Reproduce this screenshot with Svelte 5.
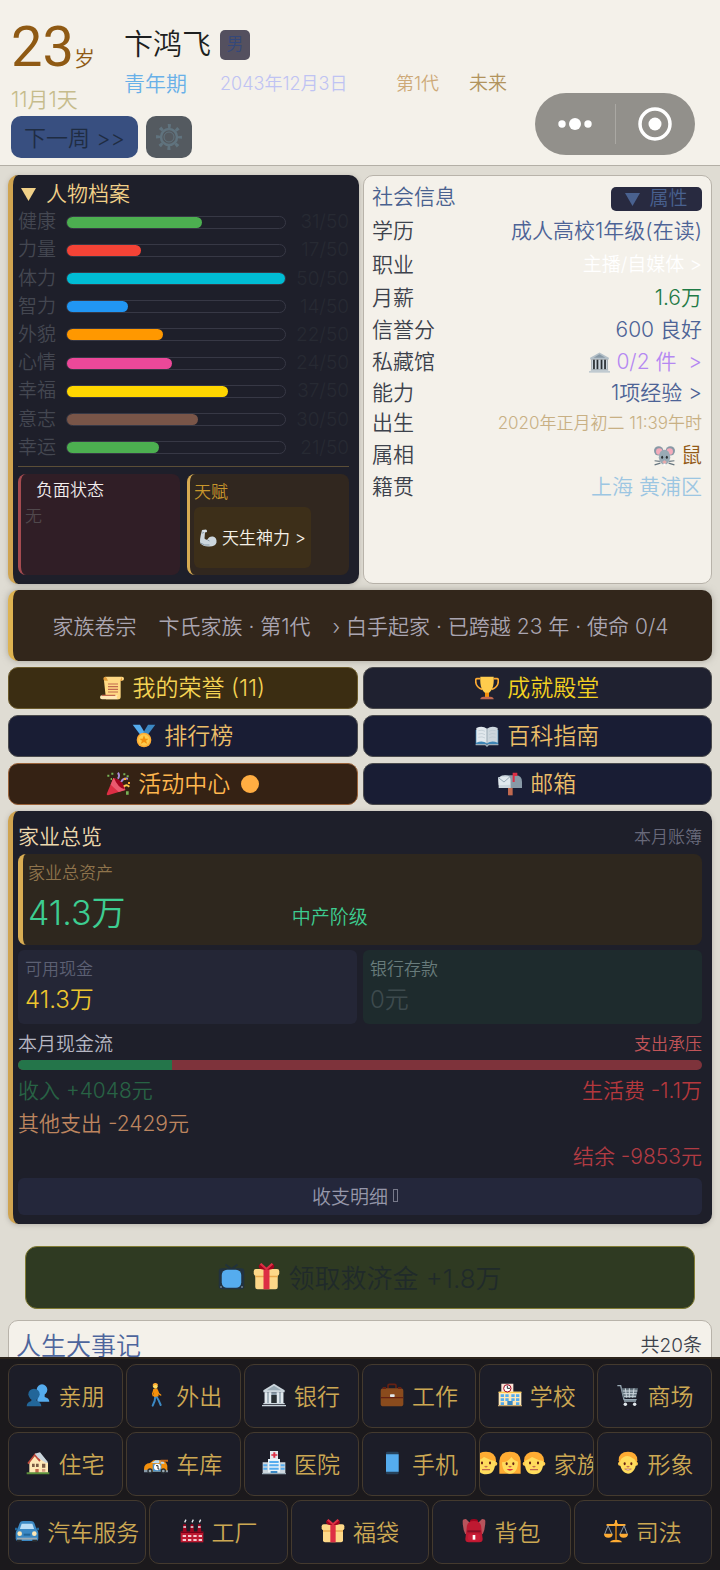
<script>
  const icons = {
    people: '<circle cx="24" cy="10" r="8" fill="#55acee"/><path d="M20 15h8v6c4 1 7 3 7 7H17v-8z" fill="#55acee"/><circle cx="12" cy="17" r="8.5" fill="#226699"/><path d="M8 23h8v4c4 1 7 3 7 8H1c0-5 3-7 7-8z" fill="#226699"/>',
    walk: '<path d="M17 19l-1 8-3 7M18 19l4 7 3 7" fill="none" stroke="#3b88c3" stroke-width="3" stroke-linecap="round"/><path d="M14 9l6-1 2 12-7 1z" fill="#f4900c"/><path d="M15 10l-2 6 1 3M20 11l2 5 3 2" fill="none" stroke="#f4900c" stroke-width="2.200" stroke-linecap="round"/><circle cx="17" cy="5" r="3.500" fill="#ffdc5d"/><path d="M13 4q0-4 4-4 4 0 4 4-3-2-8 0z" fill="#ffac33"/>',
    bank: '<path d="M18 1L2 11v3h32v-3z" fill="#ccd6dd"/><path d="M18 4L7 11h22z" fill="#99aab5"/><path d="M4 14h28v16H4z" fill="#8899a6"/><path d="M4 14h4v16H4zM10 14h4v16h-4zM22 14h4v16h-4zM28 14h4v16h-4z" fill="#e1e8ed"/><path d="M14 18h8v13h-8z" fill="#292f33"/><path d="M2 30h32v2H2zM0 33h36v2H0z" fill="#ccd6dd"/>',
    museum: '<path d="M18 1L2 10v3h32v-3z" fill="#b4c0c8"/><path d="M18 4L8 10h20z" fill="#8899a6"/><path d="M4 13h28v17H4z" fill="#292f33"/><path d="M4 13h3v17H4zM10 13h3v17h-3zM16 13h4v17h-4zM23 13h3v17h-3zM29 13h3v17h-3z" fill="#ccd6dd"/><path d="M3 30h30v2H3zM0 33h36v2H0z" fill="#aebdc7"/>',
    work: '<path d="M12 8V4q0-2 2-2h8q2 0 2 2v4" fill="none" stroke="#662113" stroke-width="2.500"/><rect x="1" y="8" width="34" height="27" rx="4" fill="#8a4b1d"/><path d="M1 21h34v2H1z" fill="#662113"/><path d="M4 6h5v3H4zM27 6h5v3h-5z" fill="#662113"/><rect x="15" y="17" width="7" height="4" rx="1" fill="#e1e8ed"/>',
    school: '<path d="M5 1h18v14H5z" fill="#fce4d6"/><path d="M1 13h34v20H1z" fill="#ffe8b6"/><path d="M1 13h34v2H1z" fill="#ffcc4d"/><circle cx="14" cy="8" r="5.500" fill="#fff" stroke="#a0041e" stroke-width="1.500"/><path d="M14 4v4h4" fill="none" stroke="#292f33" stroke-width="1.500"/><path d="M4 17h5v4H4zM11 17h5v4h-5zM20 17h5v4h-5zM27 17h5v4h-5zM4 23h5v4H4zM11 23h5v4h-5zM20 23h5v4h-5zM27 23h5v4h-5zM4 29h5v4H4zM27 29h5v4h-5z" fill="#55acee"/><path d="M14 27h8v7h-8z" fill="#3b88c3"/><path d="M0 33h36v2H0z" fill="#c1a36b"/>',
    cart: '<path d="M2 4h5l5 21h19" fill="none" stroke="#99aab5" stroke-width="2"/><path d="M8 8h25l-3 14H11z" fill="#66757f"/><path d="M10 12h22M11 16h20M12 20h18M14 8l2 14M20 8v14M27 8l-2 14" stroke="#ccd6dd" stroke-width="1.500"/><path d="M12 27h18" stroke="#99aab5" stroke-width="2"/><circle cx="14" cy="32" r="2.600" fill="#e1e8ed"/><circle cx="28" cy="32" r="2.600" fill="#e1e8ed"/>',
    house: '<path d="M5 16L14 6l8-2 11 14v15H5z" fill="#ffe8b6"/><path d="M2 18L14 3l8 11-2 2-7-8-9 12z" fill="#be4a3c"/><path d="M13 4l8-2 12 15-3 1-12-8z" fill="#ccd6dd"/><path d="M9 19h4v5H9zM15 19h4v5h-4zM24 19h5v6h-5z" fill="#7b5a43"/><path d="M14 27h5v7h-5z" fill="#c1694f"/><path d="M1 32h34v3H1z" fill="#5c913b"/><path d="M24 27h5v4h-5z" fill="#d99e82"/>',
    race: '<path d="M0 27q0-8 9-9l5-4h12q7 1 9 8v9H0z" fill="#f4900c"/><path d="M13 17l4-3h6v4H11zM25 14h3l3 5h-6z" fill="#bbddf5"/><path d="M0 28h7v4H0zM31 29h5v3h-5z" fill="#8899a6"/><path d="M25 13h11v3H25z" fill="#c46a1a"/><path d="M13 19h13v12H13z" fill="#4f93c8"/><circle cx="20" cy="24" r="5" fill="#fff"/><path d="M18 22h3v5h2" fill="none" stroke="#292f33" stroke-width="1.500"/><circle cx="9" cy="30" r="4" fill="#292f33"/><circle cx="29" cy="30" r="4" fill="#292f33"/><circle cx="9" cy="30" r="2" fill="#99aab5"/><circle cx="29" cy="30" r="2" fill="#99aab5"/>',
    hospital: '<path d="M9 13h18v21H9z" fill="#e1e8ed"/><path d="M1 17h34v17H1z" fill="#ccd6dd"/><path d="M9 12h18v20H9z" fill="#e8f2f8"/><rect x="12" y="0" width="12" height="12" fill="#e1e8ed"/><path d="M17 2h3v3h3v2h-3v3h-3V7h-3V5h3z" fill="#dd2e44"/><path d="M11 15h14v3H11zM11 20h14v3H11zM11 25h14v3H11zM2 20h6v3H2zM2 25h6v3H2zM28 20h6v3h-6zM28 25h6v3h-6z" fill="#55acee"/><path d="M13 30h10v4H13z" fill="#3b88c3"/><path d="M0 33h36v2H0z" fill="#99aab5"/>',
    phone: '<rect x="9" y="1" width="19" height="34" rx="2" fill="#27425b"/><path d="M9 5h19v26H9z" fill="#55acee"/>',
    boy: '<path d="M4 14Q4 1 18 1t14 13l-2 8H6z" fill="#ffac33"/><circle cx="6" cy="19" r="3" fill="#ffcc4d"/><circle cx="30" cy="19" r="3" fill="#ffcc4d"/><path d="M6 17q0-6 8-9 5-2 11 3 5 2 5 7c0 10-6 16-12 16S6 27 6 17z" fill="#ffdc5d"/><ellipse cx="13" cy="19" rx="1.600" ry="2.200" fill="#662113"/><ellipse cx="23" cy="19" rx="1.600" ry="2.200" fill="#662113"/><path d="M16 23q2 1.500 4 0" fill="none" stroke="#c1694f" stroke-width="1.800"/><path d="M13 27q5 4 10 0z" fill="#fff" stroke="#c1694f"/>',
    man: '<path d="M3 14Q4 1 18 1t15 13l-1 9H4z" fill="#ffac33"/><circle cx="4" cy="19" r="3" fill="#ffcc4d"/><circle cx="32" cy="19" r="3" fill="#ffcc4d"/><path d="M4 15q6-2 11-6 9 5 17 6c0 13-4 20-14 20S4 28 4 15z" fill="#ffdc5d"/><ellipse cx="12" cy="18" rx="1.600" ry="2.200" fill="#662113"/><ellipse cx="24" cy="18" rx="1.600" ry="2.200" fill="#662113"/><path d="M16 23q2 1.500 4 0M12 28h12" fill="none" stroke="#c1694f" stroke-width="2"/>',
    woman: '<path d="M2 34V15Q3 1 18 1t16 14v19H2z" fill="#ffac33"/><path d="M6 17q9 0 14-8 3 5 10 7c0 12-5 18-12 18S6 28 6 17z" fill="#ffdc5d"/><ellipse cx="13" cy="19" rx="1.600" ry="2.200" fill="#662113"/><ellipse cx="23" cy="19" rx="1.600" ry="2.200" fill="#662113"/><path d="M16 23q2 1.500 4 0" fill="none" stroke="#c1694f" stroke-width="1.800"/><path d="M13 27h10q-5 5-10 0z" fill="#dd2e44"/>',
    car: '<path d="M7 6q1-3 5-3h12q4 0 5 3l4 11H3z" fill="#3b88c3"/><path d="M10 7h16l3 9H7z" fill="#bbddf5"/><path d="M0 13h4v4H0zM32 13h4v4h-4z" fill="#226699"/><path d="M1 22q0-7 6-7h22q6 0 6 7v8q0 3-4 3H5q-4 0-4-3z" fill="#3b88c3"/><circle cx="7" cy="22" r="3.500" fill="#ffe8b6"/><circle cx="29" cy="22" r="3.500" fill="#ffe8b6"/><path d="M13 22h10v3H13z" fill="#226699"/><path d="M3 28h30v3H3z" fill="#99aab5"/><path d="M3 31h7v3H3zM26 31h7v3h-7z" fill="#292f33"/>',
    factory: '<path d="M5 8h4l1 12H4zM16 8h4l1 12h-6zM27 8h4l1 12h-6z" fill="#a0041e"/><path d="M5 11h4v2H5zM16 11h4v2h-4zM27 11h4v2h-4z" fill="#e1e8ed"/><path d="M7 5l2-4M18 5l2-4M29 5l2-4" stroke="#e1e8ed" stroke-width="2"/><path d="M1 19h34v16H1z" fill="#be1931"/><path d="M4 24h5v3H4zM12 24h5v3h-5zM20 24h5v3h-5zM28 24h5v3h-5zM4 30h5v3H4zM12 30h5v3h-5zM20 30h5v3h-5zM28 30h5v3h-5z" fill="#f4c8d0"/><path d="M1 19h34v2H1z" fill="#78001a"/>',
    gift: '<path d="M3 14h30v18q0 3-3 3H6q-3 0-3-3z" fill="#fdd888"/><rect x="1" y="8" width="34" height="9" rx="3" fill="#fdd888"/><path d="M3 17h30v2H3z" fill="#e9a94c"/><path d="M14 8h8v27h-8z" fill="#dd2e44"/><path d="M17 9Q6 9 8 3q2-4 9 5zM19 9q11 0 9-6-2-4-9 5z" fill="#a0041e"/><path d="M18 8L10 1M18 8l8-7" stroke="#dd2e44" stroke-width="3"/>',
    bag: '<path d="M1 3q0-3 5-3l6 6-3 14-4 3q-4-8-4-20zM35 3q0-3-5-3l-6 6 3 14 4 3q4-8 4-20z" fill="#b8545c"/><path d="M12 3q0-3 6-3t6 3v5H12z" fill="#a0041e"/><path d="M7 14Q7 3 18 3t11 11l2 16q0 5-5 5H10q-5 0-5-5z" fill="#be1931"/><path d="M8 17h20v3H8z" fill="#850f27"/><rect x="9" y="22" width="18" height="11" rx="4" fill="#c91c38"/><path d="M16 24h4v7h-4z" fill="#fff"/>',
    law: '<path d="M17 2h2v29h-2z" fill="#f4900c"/><path d="M5 9h26M18 3v5" stroke="#ffac33" stroke-width="3" stroke-linecap="round"/><circle cx="18" cy="8" r="3" fill="#ffac33"/><path d="M6 10L1 23M6 10l6 13M30 10l-6 13M30 10l5 13" stroke="#8899a6" stroke-width="1.500"/><path d="M0 22h13q0 6-6.500 6T0 22zM23 22h13q0 6-6.500 6T23 22z" fill="#ffac33"/><path d="M9 35q1-4 9-4t9 4z" fill="#ffac33"/>',
    scroll: '<path d="M8 1h25q3 0 3 3t-3 3h-2v24q0 4-4 4H9L6 7z" fill="#ffd983"/><path d="M8 1q-3 0-3 3t3 3h4l-2-4zM33 1v6h-3z" fill="#e39f3d"/><path d="M3 29q-3 0-3 3t3 3h25q-3 0-3-3t3-3z" fill="#ffe8b6"/><path d="M3 29h20M12 12h15M12 16h15M12 20h15M12 24h15" stroke="#c1694f" stroke-width="1.800"/>',
    trophy: '<path d="M8 4H3q-2 0-2 3 0 10 10 13M28 4h5q2 0 2 3 0 10-10 13" fill="none" stroke="#ffac33" stroke-width="2.500"/><path d="M8 1h20c1 15-3 21-7 24v5h-6v-5C11 22 7 16 8 1z" fill="#ffcc4d"/><path d="M15 25h6v7h-6z" fill="#f4900c"/><path d="M8 35q0-4 5-4h10q5 0 5 4z" fill="#c1694f"/>',
    medal: '<path d="M1 1h11l9 15-5 5z" fill="#55acee"/><path d="M35 1H24l-9 15 5 5z" fill="#3b88c3"/><circle cx="18" cy="24" r="11" fill="#ffac33"/><circle cx="18" cy="24" r="8.500" fill="#ffcc4d"/><path d="M18 17l2 5h5l-4 3 2 5-5-3-5 3 2-5-4-3h5z" fill="#f4900c"/>',
    book: '<path d="M1 9h34v22H1z" fill="#3e85b5"/><path d="M2 6q9-4 16 1v22q-7-5-16-1z" fill="#e1e8ed"/><path d="M34 6q-9-4-16 1v22q7-5 16-1z" fill="#ccd6dd"/><path d="M18 7v22" fill="none" stroke="#99aab5" stroke-width="1.500"/><path d="M5 10q6-2 10 1M5 15q6-2 10 1M5 20q6-2 10 1M31 10q-6-2-10 1M31 15q-6-2-10 1M31 20q-6-2-10 1" fill="none" stroke="#b8c5ce"/><path d="M1 31h15l2 2 2-2h15" fill="none" stroke="#a0aeb8" stroke-width="2"/>',
    party: '<path d="M11 9q15 4 18 18L3 35q-2 0-2-2z" fill="#dd2e44"/><path d="M11 9q15 4 18 18L19 30 7 19z" fill="#ea596e"/><path d="M12 9q14 3 16 17-10-2-16-17z" fill="#a0041e"/><path d="M18 10q3-5 0-9M23 15q2-6 10-5" fill="none" stroke="#aa8dd8" stroke-width="3"/><path d="M27 22q3-4 8 0" fill="none" stroke="#ffcc4d" stroke-width="3"/><path d="M2 4h3v3H2zM8 1h3v3H8zM26 2h3v3h-3zM31 5h3v3h-3zM30 29h4v5h-4zM7 9h2v3H7z" fill="#77b255"/><path d="M27 9h3v3h-3zM33 15h3v3h-3z" fill="#ffac33"/>',
    mailbox: '<path d="M15 22h7v13h-7z" fill="#c1694f"/><path d="M10 5h17q9 0 9 10v9H10z" fill="#8899a6"/><path d="M1 13q0-8 9-8t9 8v11H1z" fill="#ccd6dd"/><path d="M0 8l18-1v12L1 20z" fill="#e1e8ed"/><path d="M0 8l9 7 9-8" fill="none" stroke="#99aab5" stroke-width="1.500"/><path d="M22 1h7v5h-4v9h-3z" fill="#dd2e44"/>',
    arm: '<path d="M6 2l8-1q3 1 2 5l-4 1-1 12q2 3 6 2 3-7 11-6 8 2 7 12-2 8-14 8Q9 36 3 29 0 24 6 2z" fill="#ccd6dd"/><path d="M6 8q3 1 4-2M17 22l4 2M3 28q8 6 18 4" fill="none" stroke="#8899a6" stroke-width="2"/><path d="M8 3l5-1 1 3-4 1z" fill="#e1e8ed"/>',
    mouse: '<circle cx="8" cy="10" r="8" fill="#8899a6"/><circle cx="28" cy="10" r="8" fill="#8899a6"/><circle cx="9" cy="11" r="5.500" fill="#f4abba"/><circle cx="27" cy="11" r="5.500" fill="#f4abba"/><path d="M18 8q9 0 10 14-3 12-10 12T8 22Q9 8 18 8z" fill="#99aab5"/><ellipse cx="14" cy="21" rx="1.700" ry="2.600" fill="#292f33"/><ellipse cx="22" cy="21" rx="1.700" ry="2.600" fill="#292f33"/><path d="M1 27l9 1M1 34l10-3M35 27l-9 1M35 34l-10-3" stroke="#66757f" stroke-width="2"/><path d="M14 29l4-3 4 3-4 4z" fill="#e6aaaa"/><path d="M16 32h4v3h-4z" fill="#fff"/>',
    tv: '<path d="M18 8L10 2M18 8l8-6" stroke="#22323a" stroke-width="2.500"/><rect x="1" y="7" width="34" height="28" rx="4" fill="#22323f"/><rect x="5" y="9" width="26" height="24" rx="7" fill="#55acee"/><path d="M3 31h2v2H3zM31 31h2v2h-2z" fill="#8899a6"/>'
  };

  const stats = [
    ['健康', 31, '#4caf50'],
    ['力量', 17, '#f44336'],
    ['体力', 50, '#00bcd4'],
    ['智力', 14, '#2196f3'],
    ['外貌', 22, '#ff9800'],
    ['心情', 24, '#ec4899'],
    ['幸福', 37, '#ffd600'],
    ['意志', 30, '#795548'],
    ['幸运', 21, '#4caf50']
  ];

  const social = [
    { k: '学历', v: '成人高校1年级(在读)', c: 'blue tall' },
    { k: '职业', v: '主播/自媒体 >', c: 'white tall', link: true },
    { k: '月薪', v: '1.6万', c: 'green' },
    { k: '信誉分', v: '600 良好', c: 'blue' },
    { k: '私藏馆', v: '0/2 件  >', c: 'purple', icon: 'museum', link: true },
    { k: '能力', v: '1项经验 >', c: 'blue short', link: true },
    { k: '出生', v: '2020年正月初二 11:39午时', c: 'sand short' },
    { k: '属相', v: '鼠', c: 'brown tall', icon: 'mouse' },
    { k: '籍贯', v: '上海 黄浦区', c: 'sky short' }
  ];

  const shortcuts = [
    { icon: 'scroll', t: '我的荣誉 (11)', c: 'olive' },
    { icon: 'trophy', t: '成就殿堂', c: 'slate' },
    { icon: 'medal', t: '排行榜', c: '' },
    { icon: 'book', t: '百科指南', c: '' },
    { icon: 'party', t: '活动中心', c: 'rust', dot: true },
    { icon: 'mailbox', t: '邮箱', c: '' }
  ];

  const income = 4048;
  const spending = 13901;
  const incomeShare = (income / (income + spending)) * 100;

  const nav = [
    [['people', '亲朋'], ['walk', '外出'], ['bank', '银行'], ['work', '工作'], ['school', '学校'], ['cart', '商场']],
    [['house', '住宅'], ['race', '车库'], ['hospital', '医院'], ['phone', '手机'], ['man woman man', '家族'], ['boy', '形象']],
    [['car', '汽车服务'], ['factory', '工厂'], ['gift', '福袋'], ['bag', '背包'], ['law', '司法']]
  ];
</script>

{#snippet pic(name)}
  <svg class="pic" viewBox="0 0 36 36" aria-hidden="true">{@html icons[name]}</svg>
{/snippet}

<div class="app">
  <header>
    <div class="top">
      <div class="age">
        <div class="years"><span class="big">23</span>岁</div>
        <div class="day">11月1天</div>
      </div>
      <div class="who">
        <h1>卞鸿飞 <span class="sex">男</span></h1>
        <div class="meta">
          <span class="stage">青年期</span>
          <span class="date">2043年12月3日</span>
          <span class="gen">第1代</span>
          <span class="era">未来</span>
        </div>
      </div>
    </div>
    <div class="actions">
      <button class="next">下一周 &gt;&gt;</button>
      <button class="gear" aria-label="设置">
        <svg viewBox="0 0 28 28" fill="none" stroke="#60737e">
          <circle cx="14" cy="14" r="8" stroke-width="2.500" />
          <circle cx="14" cy="14" r="5" stroke-width="1" />
          <circle cx="14" cy="14" r="11" stroke-width="4" stroke-dasharray="3 5.640" stroke-dashoffset="1.500" />
        </svg>
      </button>
    </div>
    <div class="capsule">
      <button aria-label="更多">
        <svg viewBox="0 0 36 14" width="36" height="14" fill="#fff"><circle cx="5" cy="7" r="3.700" /><circle cx="18" cy="7" r="6" /><circle cx="31" cy="7" r="3.700" /></svg>
      </button>
      <i></i>
      <button aria-label="关闭">
        <svg viewBox="0 0 34 34" width="34" height="34"><circle cx="17" cy="17" r="15" fill="none" stroke="#fff" stroke-width="3.500" /><circle cx="17" cy="17" r="6.500" fill="#fff" /></svg>
      </button>
    </div>
  </header>

  <main>
    <div class="pair">
      <section class="panel dark profile">
        <h2><svg class="tri" viewBox="0 0 15 13"><path d="M0 0h15L7.500 13z" fill="currentColor" /></svg>人物档案</h2>
        <div class="stats">
          {#each stats as [name, value, color]}
            <div class="stat">
              <span>{name}</span>
              <div class="track"><div class="fill" style="width:{value * 2}%;background:{color}"></div></div>
              <span class="num">{value}/50</span>
            </div>
          {/each}
        </div>
        <div class="traits">
          <div class="bad">
            <h3>负面状态</h3>
            <p>无</p>
          </div>
          <div class="gift">
            <h3>天赋</h3>
            <button>{@render pic('arm')}天生神力 &gt;</button>
          </div>
        </div>
      </section>

      <section class="panel light social">
        <div class="head">
          <h2>社会信息</h2>
          <button><svg class="tri" viewBox="0 0 15 13"><path d="M0 0h15L7.500 13z" fill="currentColor" /></svg>属性</button>
        </div>
        {#each social as row}
          <div class="info {row.c}">
            <span class="key">{row.k}</span>
            {#if row.link}
              <button class="val">{#if row.icon}{@render pic(row.icon)}{/if}{row.v}</button>
            {:else}
              <span class="val">{#if row.icon}{@render pic(row.icon)}{/if}{row.v}</span>
            {/if}
          </div>
        {/each}
      </section>
    </div>

    <button class="clan">
      <span>家族卷宗</span>
      <span>卞氏家族 · 第1代</span>
      <span>› 白手起家 · 已跨越 23 年 · 使命 0/4</span>
    </button>

    <div class="shortcuts">
      {#each shortcuts as s}
        <button class={s.c}>{@render pic(s.icon)}{s.t}{#if s.dot}<i class="dot"></i>{/if}</button>
      {/each}
    </div>

    <section class="panel dark estate">
      <div class="line title"><h2>家业总览</h2><span class="note">本月账簿</span></div>
      <div class="total">
        <div class="label">家业总资产</div>
        <div class="figures"><strong>41.3万</strong><span>中产阶级</span></div>
      </div>
      <div class="accounts">
        <div class="cash"><div class="label">可用现金</div><div class="sum">41.3万</div></div>
        <div class="saving"><div class="label">银行存款</div><div class="sum">0元</div></div>
      </div>
      <div class="line flow"><h3>本月现金流</h3><span>支出承压</span></div>
      <div class="ratio"><div style="width:{incomeShare}%"></div></div>
      <div class="line item"><span class="in">收入 +4048元</span><span class="out">生活费 -1.1万</span></div>
      <div class="line item"><span class="other">其他支出 -2429元</span></div>
      <div class="line item"><span></span><span class="net">结余 -9853元</span></div>
      <button class="detail">收支明细<i></i></button>
    </section>

    <button class="relief">{@render pic('tv')}{@render pic('gift')}<span>领取救济金 +1.8万</span></button>

    <section class="panel light events">
      <h2>人生大事记</h2><span>共20条</span>
    </section>
  </main>

  <nav>
    {#each nav as row}
      <div class="navrow">
        {#each row as [names, label]}
          <button>
            <span class="pics">{#each names.split(' ') as n}{@render pic(n)}{/each}</span>
            <span>{label}</span>
          </button>
        {/each}
      </div>
    {/each}
  </nav>
</div>

<style>
  :global(body) { margin: 0; background: #dfdcd3; }
  .app, .app * { box-sizing: border-box; }
  .app {
    height: 100vh; display: flex; flex-direction: column; overflow: hidden;
    font-family: Inter, "Noto Sans CJK SC", sans-serif; font-weight: 350; color: #3d424c;
  }
  h1, h2, h3, p { margin: 0; font-size: inherit; font-weight: inherit; }
  button { font: inherit; color: inherit; border: 0; background: none; padding: 0; margin: 0; cursor: pointer; white-space: nowrap; }
  .pic { width: 24px; height: 24px; flex: none; display: block; }
  .tri { width: 15px; height: 13px; flex: none; }

  header { position: relative; flex: none; background: #f4f1ea; border-bottom: 1px solid #b3afa6; padding: 18px 11px 7px; height: 166px; }
  .top { display: flex; height: 98px; }
  .age { width: 113px; }
  .years { color: #8f5a14; font-size: 21px; line-height: 58px; height: 68px; }
  .big { font-family: Roboto, sans-serif; font-size: 56px; font-weight: 400; }
  .day { font-size: 21px; line-height: 28px; color: #c6bc8c; }
  h1 { display: flex; align-items: center; gap: 9px; font-size: 29px; line-height: 40px; padding-top: 7px; color: #1d1f20; }
  .sex { width: 30px; height: 30px; border-radius: 5px; background: #54505f; color: #34487a; font-size: 17px; line-height: 29px; text-align: center; }
  .meta { display: flex; font-size: 19px; line-height: 28px; padding-top: 5px; white-space: nowrap; }
  .stage { width: 96px; font-size: 21px; color: #68b0e8; }
  .date { width: 176px; font-size: 18px; color: #bfc3f3; }
  .gen { width: 73px; font-size: 18px; color: #cda977; }
  .era { color: #b1935c; }
  .actions { display: flex; gap: 8px; }
  .next { width: 127px; height: 42px; padding-bottom: 2px; border-radius: 10px; background: #384f80; color: #1f2c42; font-size: 22px; }
  .gear { width: 46px; height: 42px; border-radius: 10px; background: #545a60; display: grid; place-items: center; }
  .gear svg { width: 28px; height: 28px; }
  .capsule { position: absolute; right: 25px; top: 93px; width: 160px; height: 62px; border-radius: 31px; background: #92908b; display: flex; align-items: center; }
  .capsule button { flex: 1; display: grid; place-items: center; }
  .capsule i { width: 1px; height: 40px; background: #aaa8a3; }

  main { flex: 1; min-height: 0; overflow-y: auto; scrollbar-width: none; padding: 9px 8px 0; display: flex; flex-direction: column; }
  main > * { flex: none; }
  .panel { border-radius: 10px; }
  .dark { background: #1e1f2a; border-left: 5px solid #d0a450; box-shadow: 0 1px 5px #77736b66; }
  .light { background: #f4f1ea; border: 1px solid #b8b3aa; }

  .pair { display: grid; grid-template-columns: 351fr 349fr; gap: 4px; height: 409px; }
  .profile { padding: 5px 10px 9px 5px; display: flex; flex-direction: column; min-width: 0; }
  .profile h2 { display: flex; align-items: center; gap: 10px; padding-left: 3px; font-size: 21px; line-height: 28px; color: #f0d088; }
  .stats { height: 254px; display: grid; grid-auto-rows: 1fr; }
  .stat { display: flex; align-items: center; font-size: 19px; line-height: 28px; color: #444751; }
  .stat > span { width: 48px; }
  .track { flex: 1; height: 13px; border-radius: 7px; border: 1px solid #373845; }
  .fill { height: 100%; border-radius: 6px; }
  .stat .num { width: 63px; text-align: right; color: #272a33; }
  .traits { flex: 1; margin-top: 4px; border-top: 1px solid #5b4e37; padding-top: 7px; display: grid; grid-template-columns: 1fr 1fr; gap: 7px; font-size: 17px; line-height: 26px; }
  .bad { border-left: 3px solid #a54b50; border-radius: 8px; background: #301e26; padding: 3px 4px; color: #50484c; }
  .bad h3 { padding-left: 11px; color: #f2eded; }
  .gift { border-left: 3px solid #d5aa52; border-radius: 8px; background: #31271f; padding: 5px 4px 7px; display: flex; flex-direction: column; align-items: flex-start; }
  .gift h3 { color: #c8962c; }
  .gift button { flex: 1; border-radius: 6px; background: #3d2f19; padding: 0 5px; display: flex; align-items: center; gap: 5px; color: #f5f1e8; margin-top: 2px; }
  .gift .pic { width: 18px; height: 18px; }

  .social { padding: 8px 9px 0 8px; min-width: 0; }
  .head { display: flex; justify-content: space-between; align-items: center; height: 30px; color: #49618f; }
  .head h2 { font-size: 21px; line-height: 26px; padding-bottom: 4px; }
  .head button { width: 91px; height: 24px; border-radius: 5px; background: #282a40; font-size: 19px; line-height: 24px; display: flex; align-items: center; justify-content: center; gap: 9px; }
  .info { display: flex; justify-content: space-between; align-items: center; height: 32px; font-size: 21px; line-height: 28px; white-space: nowrap; }
  .info.tall { height: 34px; }
  .info.short { height: 30px; }
  .val { display: flex; align-items: center; gap: 6px; white-space: pre; }
  .val .pic { width: 21px; height: 21px; }
  .blue .val { color: #4d6396; }
  .white .val { color: #fff; font-size: 19px; }
  .green .val { color: #1f7a46; }
  .purple .val { color: #b488f2; }
  .sand .val { color: #c8b084; font-size: 17px; }
  .brown .val { color: #925a17; }
  .sky .val { color: #9cc6e2; }

  .clan { margin-top: 6px; height: 71px; padding: 0 4px 2px 0; border-left: 5px solid #deb351; border-radius: 10px; background: #32261b; box-shadow: 0 0 7px #77736b88; color: #aaa5b1; font-size: 21px; display: flex; align-items: center; justify-content: center; gap: 22px; }

  .shortcuts { margin-top: 6px; display: grid; grid-template-columns: 1fr 1fr; gap: 6px 5px; }
  .shortcuts button { height: 42px; border-radius: 10px; border: 1px solid #4a4a4c; background: #191d34; color: #ebbd68; font-size: 23px; line-height: 32px; display: flex; align-items: center; justify-content: center; gap: 8px; }
  .shortcuts .olive { background: #3b2d12; border-color: #6b5a2b; color: #f4d354; }
  .shortcuts .slate { background: #1f2130; color: #f3d121; }
  .shortcuts .rust { background: #352214; border-color: #9a6239; color: #ffb64e; }
  .dot { width: 18px; height: 18px; border-radius: 50%; background: #ffad42; margin-left: 3px; }

  .estate { margin-top: 6px; padding: 8px 10px 9px 5px; }
  .line { display: flex; justify-content: space-between; align-items: center; white-space: nowrap; }
  .title { height: 32px; margin-bottom: 3px; }
  .title h2 { font-size: 21px; color: #edd9ae; }
  .note { font-size: 17px; color: #68697a; }
  .label { font-size: 17px; line-height: 28px; }
  .total { height: 91px; border-left: 5px solid #d9ad53; border-radius: 8px; background: #2e271e; padding: 5px; }
  .total .label { color: #8f744c; }
  .figures { display: grid; grid-template-columns: 265fr 407fr; align-items: center; line-height: 52px; color: #3dcd91; }
  .figures strong { font-size: 34px; font-weight: inherit; }
  .figures span { font-size: 19px; padding-top: 10px; line-height: 42px; }
  .accounts { margin-top: 5px; display: grid; grid-template-columns: 1fr 1fr; gap: 6px; }
  .accounts > div { height: 74px; border-radius: 6px; padding: 5px 7px; }
  .cash { background: #242636; color: #5c6073; }
  .saving { background: #1e2b2d; color: #687b7b; }
  .sum { font-size: 24px; line-height: 34px; }
  .cash .sum { color: #eec62e; }
  .saving .sum { color: #3d4a4d; }
  .flow { height: 36px; }
  .flow h3 { font-size: 19px; color: #b6b7c3; }
  .flow span { font-size: 17px; color: #c25458; }
  .ratio { height: 10px; border-radius: 5px; background: #7e333b; margin-bottom: 2px; overflow: hidden; }
  .ratio div { height: 100%; background: #24754a; }
  .item { height: 33px; font-size: 21px; }
  .in { color: #286345; }
  .out { color: #b5383d; }
  .other { color: #bd855f; }
  .net { color: #b03b43; }
  .detail { width: 100%; height: 37px; margin-top: 7px; padding: 0 10px 3px 0; border-radius: 6px; background: #24273b; color: #9697aa; font-size: 19px; display: flex; align-items: center; justify-content: center; gap: 5px; }
  .detail i { width: 5px; height: 13px; border: 1px solid #77798a; }

  .relief { margin: 22px 17px 0; height: 63px; padding-bottom: 2px; border-radius: 12px; border: 1px solid #817c33; background: #2f3a22; color: #202a2a; font-size: 26px; display: flex; align-items: center; justify-content: center; gap: 8px; }
  .relief .pic { width: 27px; height: 27px; }

  .events { margin-top: 11px; height: 90px; padding: 7px 9px 0 7px; display: flex; justify-content: space-between; align-items: flex-start; line-height: 36px; }
  .events h2 { font-size: 25px; color: #4d659c; }
  .events span { font-size: 19px; }

  nav { flex: none; background: #1b191c; border-top: 2px solid #2c241b; padding: 5px 8px 6px; display: grid; gap: 4px; }
  .navrow { display: grid; grid-auto-flow: column; grid-auto-columns: minmax(0, 1fr); gap: 3px; }
  .navrow button { height: 64px; padding-bottom: 2px; border: 1px solid #443a2e; border-radius: 10px; background: #1c1d28; color: #cca853; font-size: 23px; overflow: hidden; display: flex; align-items: center; justify-content: center; gap: 8px; }
  .pics { display: flex; flex: none; }
</style>
